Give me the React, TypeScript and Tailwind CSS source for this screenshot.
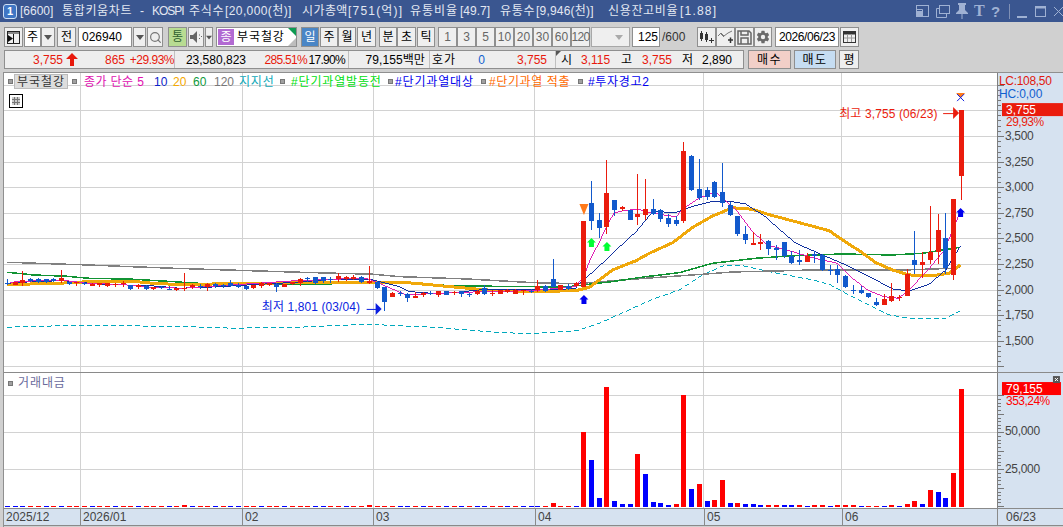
import React from "react";
import { Search } from "lucide-react";
import { IoSettingsSharp } from "react-icons/io5";

type Row = [number, number, number, number, string];
type Pt = [number, number];

// zoom-space readings -> page pixels
const seg = (base: number, rows: Row[]) =>
  rows.map(([hi, top, bot, lo, c]) => ({
    hi: Math.round(base + hi / 3),
    top: Math.round(base + top / 3),
    bot: Math.round(base + bot / 3),
    lo: Math.round(base + lo / 3),
    c,
  }));

const candles = [
  ...seg(250, [
    [88, 98, 100, 106, "b"], [97, 97, 104, 105, "r"], [63, 90, 100, 107, "r"], [83, 88, 92, 95, "b"],
    [85, 86, 96, 98, "b"], [86, 87, 97, 98, "b"], [85, 88, 94, 96, "b"], [60, 84, 93, 98, "r"],
    [95, 95, 102, 106, "b"], [95, 97, 99, 107, "r"], [95, 99, 101, 105, "b"], [99, 102, 107, 109, "r"],
    [99, 100, 106, 110, "r"], [99, 100, 107, 110, "r"], [99, 102, 104, 110, "r"], [92, 100, 103, 110, "r"],
    [105, 106, 116, 119, "b"], [103, 105, 110, 117, "r"], [105, 107, 116, 120, "b"], [110, 112, 116, 119, "r"],
    [107, 112, 114, 118, "b"], [109, 117, 119, 120, "b"], [115, 115, 121, 122, "r"], [69, 114, 116, 122, "r"],
    [103, 105, 112, 116, "r"], [102, 108, 110, 116, "b"], [100, 102, 111, 122, "r"], [100, 101, 108, 115, "b"],
    [103, 106, 108, 113, "b"], [90, 100, 107, 110, "b"], [100, 104, 110, 113, "b"], [108, 108, 118, 120, "b"],
    [106, 106, 113, 117, "r"], [95, 98, 107, 113, "r"], [98, 98, 106, 108, "r"], [100, 103, 110, 126, "b"],
    [102, 102, 110, 110, "r"], [97, 97, 103, 104, "r"], [85, 87, 98, 108, "r"],
  ]),
  ...seg(240, [
    [112, 114, 117, 126, "b"], [111, 111, 130, 133, "b"], [111, 111, 122, 130, "b"], [110, 117, 119, 130, "b"],
    [100, 108, 118, 126, "r"], [108, 112, 118, 122, "r"], [105, 110, 117, 121, "r"], [108, 111, 126, 128, "b"],
    [78, 123, 130, 131, "r"], [122, 125, 145, 148, "b"], [140, 142, 186, 213, "b"], [155, 159, 171, 172, "r"],
    [152, 159, 161, 168, "b"], [160, 162, 175, 186, "b"], [156, 168, 174, 174, "r"], [155, 159, 165, 170, "r"],
    [153, 158, 160, 165, "b"], [153, 154, 165, 171, "r"], [152, 153, 165, 166, "b"], [152, 155, 158, 166, "r"],
    [153, 153, 162, 170, "b"], [160, 161, 164, 170, "b"], [151, 153, 161, 164, "r"], [135, 145, 162, 165, "b"],
    [150, 158, 160, 167, "r"], [150, 150, 161, 161, "r"], [147, 150, 156, 160, "r"], [146, 150, 162, 162, "r"],
    [150, 150, 154, 165, "r"], [147, 152, 154, 159, "b"], [120, 139, 150, 155, "r"], [135, 137, 154, 155, "b"],
    [57, 117, 142, 142, "b"], [135, 135, 150, 150, "r"], [132, 137, 147, 150, "b"], [126, 130, 139, 140, "r"],
  ]),
  ...seg(130, [
    [273, 273, 470, 470, "r"], [153, 219, 272, 299, "b"], [249, 270, 293, 323, "b"], [90, 189, 290, 311, "r"],
    [210, 210, 240, 258, "b"], [228, 232, 236, 244, "r"], [240, 240, 270, 270, "b"], [132, 252, 260, 285, "r"],
    [147, 237, 255, 270, "r"], [207, 237, 251, 255, "b"], [237, 240, 267, 276, "b"], [252, 264, 282, 291, "b"],
    [258, 270, 282, 288, "b"], [36, 63, 273, 279, "r"], [75, 78, 180, 183, "b"], [87, 177, 204, 210, "b"],
    [171, 180, 201, 210, "b"], [153, 156, 201, 204, "b"], [99, 186, 219, 231, "b"], [216, 225, 255, 258, "b"],
    [258, 258, 312, 318, "b"], [288, 312, 330, 342, "b"], [306, 339, 345, 345, "r"], [312, 336, 342, 360, "r"],
    [330, 333, 357, 375, "b"], [345, 354, 360, 390, "b"], [336, 336, 378, 384, "b"],
  ]),
  ...seg(190, [
    [183, 198, 219, 222, "b"], [180, 210, 216, 225, "b"], [189, 198, 216, 216, "r"], [183, 192, 198, 219, "b"],
    [192, 195, 240, 243, "b"], [225, 240, 243, 255, "b"], [225, 237, 255, 279, "b"], [255, 258, 291, 294, "b"],
    [285, 300, 303, 312, "b"], [288, 300, 309, 312, "b"], [309, 309, 321, 324, "b"], [324, 336, 345, 348, "b"],
    [312, 327, 345, 345, "r"], [279, 318, 333, 336, "r"], [315, 321, 324, 333, "r"], [237, 252, 318, 318, "r"],
    [123, 210, 225, 252, "b"], [186, 216, 225, 264, "r"], [48, 186, 210, 222, "r"], [72, 120, 186, 222, "r"],
    [69, 144, 234, 252, "b"], [27, 27, 255, 270, "r"], [-240, -240, -42, 30, "r"],
  ]),
];

const z3 = (p: number[][]): Pt[] => p.map(([x, y]) => [x / 3, 250 + y / 3]);
const z4 = (p: number[][]): Pt[] => p.map(([x, y]) => [300 + x / 3, 240 + y / 3]);
const z5 = (p: number[][]): Pt[] => p.map(([x, y]) => [570 + x / 3, 130 + y / 3]);
const z6 = (p: number[][]): Pt[] => p.map(([x, y]) => [780 + x / 3, 190 + y / 3]);
const pts = (p: Pt[]) => p.map(([x, y]) => `${x.toFixed(1)},${y.toFixed(1)}`).join(" ");

const ma120: Pt[] = [
  ...z3([[21, 37], [170, 42], [265, 45], [360, 49], [520, 55], [680, 60], [900, 67]]),
  ...z4([[220, 103], [300, 110], [500, 117], [700, 128], [830, 131]]),
  ...z5([[200, 447], [400, 433], [490, 426], [660, 422]]),
  ...z6([[95, 240], [380, 240], [520, 235], [544, 232]]),
];
const ma60: Pt[] = [
  ...z3([[21, 67], [100, 75], [200, 79], [265, 85], [400, 88], [520, 95], [590, 100], [900, 103]]),
  ...z4([[200, 130], [345, 130], [450, 137], [660, 140], [800, 141]]),
  ...z5([[120, 456], [230, 440], [330, 428], [430, 400], [560, 385], [660, 378]]),
  ...z6([[187, 192], [340, 195], [430, 190], [544, 172]]),
];
const ma20: Pt[] = [
  ...z3([[21, 105], [95, 102], [180, 100], [250, 96], [410, 95], [480, 102], [590, 103], [900, 98]]),
  ...z4([[130, 128], [240, 128], [300, 127], [345, 130], [450, 140], [560, 150], [700, 155], [830, 152]]),
  ...z5([[60, 472], [130, 420], [200, 392], [240, 370], [310, 338], [370, 292], [430, 258], [490, 233], [550, 238], [600, 254], [660, 270]]),
  ...z6([[150, 122], [190, 150], [240, 182], [290, 218], [340, 240], [390, 255], [460, 257], [510, 250], [544, 225]]),
];
const ma10: Pt[] = [
  ...z3([[21, 100], [100, 95], [190, 92], [300, 103], [450, 107], [540, 115], [640, 111], [890, 97]]),
  ...z4([[50, 122], [100, 118], [220, 120], [300, 140], [330, 155], [420, 162], [540, 150], [700, 150], [790, 148], [830, 145]]),
  ...z5([[20, 470], [90, 408], [140, 360], [200, 305], [250, 245], [320, 247], [360, 232], [420, 216], [480, 214], [530, 222], [590, 262]]),
  ...z6([[0, 118], [50, 160], [130, 195], [200, 225], [280, 265], [340, 297], [390, 303], [450, 283], [500, 240], [544, 168]]),
];
const ma5: Pt[] = [
  ...z3([[30, 97], [100, 93], [200, 92], [260, 100], [380, 105], [450, 112], [550, 115], [650, 108], [890, 92]]),
  ...z4([[100, 118], [200, 115], [250, 135], [320, 165], [420, 160], [550, 155], [700, 152], [830, 140]]),
  ...z5([[20, 468], [43, 440], [64, 385], [88, 340], [112, 290], [133, 250], [157, 243], [205, 237], [250, 250], [320, 260], [343, 235], [388, 205], [436, 186], [457, 200], [505, 245], [550, 305], [595, 345], [660, 362]]),
  ...z6([[106, 205], [175, 220], [220, 265], [265, 300], [313, 320], [358, 325], [390, 300], [451, 235], [496, 180], [544, 65]]),
];
const support: Pt[] = [
  ...z3([[21, 232], [240, 226], [560, 230], [700, 235], [900, 232]]),
  ...z4([[200, 253], [400, 262], [600, 278], [700, 281], [830, 273], [900, 250]]),
  ...z5([[250, 508], [330, 480], [400, 435], [460, 408], [520, 407], [600, 425]]),
  ...z6([[100, 270], [150, 283], [200, 310], [270, 345], [330, 375], [400, 387], [500, 385], [520, 375], [544, 363]]),
];

const candleX = (i: number) => Math.round(7.05 + 7.698 * i);
const vGrid = [80, 242, 373, 535, 704, 842];
const priceGrid = [85, 110, 136, 162, 187, 213, 238, 264, 290, 315, 341, 366];
const priceLabels: [string, number][] = [
  ["3,500", 136], ["3,250", 162], ["3,000", 187], ["2,750", 213], ["2,500", 238],
  ["2,250", 264], ["2,000", 290], ["1,750", 315], ["1,500", 341],
];
const volGrid = [395, 432, 469];

// last 50 bars read off the volume pane: [top in zoom px, colour]
const volTail: [number, string][] = [
  [186, "r"], [270, "b"], [384, "b"], [51, "r"], [393, "b"], [402, "b"], [402, "b"], [252, "r"], [312, "b"], [396, "b"],
  [399, "b"], [405, "b"], [402, "r"], [75, "r"], [357, "b"], [342, "r"], [393, "b"], [390, "r"], [330, "r"], [399, "b"],
  [399, "r"], [402, "b"], [402, "b"], [405, "b"], [405, "r"], [405, "r"], [405, "b"], [405, "b"], [405, "r"], [408, "b"],
  [405, "r"], [405, "r"], [408, "b"], [405, "r"], [405, "r"], [405, "r"], [408, "b"], [408, "r"], [408, "r"], [408, "b"],
  [405, "r"], [408, "b"], [402, "r"], [393, "r"], [402, "b"], [360, "r"], [366, "b"], [384, "b"], [309, "r"], [57, "r"],
];
const volHead = "bbbrrbrbrrrbrrbrrbrrrbrrbrrbrbbrrbrrbrrrbbrrbrrbrrrbbrbrrbrbrbbrrbrbbbrbrrb";
const volumes = [
  ...Array.from({ length: 75 }).map((_, i) => ({
    top: i === 23 || i === 47 ? 505 : i === 71 ? 503 : 506,
    c: i === 23 || i === 47 || i === 71 ? "r" : volHead[i],
  })),
  ...volTail.map(([t, c]) => ({ top: Math.round(370 + t / 3), c })),
];

const BlockUp = ({ x, y, c }: { x: number; y: number; c: string }) => (
  <polygon
    points={`${x},${y} ${x + 4.5},${y + 4.5} ${x + 2.5},${y + 4.5} ${x + 2.5},${y + 9} ${x - 2.5},${y + 9} ${x - 2.5},${y + 4.5} ${x - 4.5},${y + 4.5}`}
    fill={c}
  />
);

const Ticks = ({ ys, x = 0 }: { ys: number[]; x?: number }) => (
  <g stroke="#777777" shapeRendering="crispEdges">
    {ys.map((y) => (
      <line key={y} x1={x} x2={x + 6} y1={y + 0.5} y2={y + 0.5} />
    ))}
    {ys.slice(0, -1).flatMap((y, i) =>
      [1, 2, 3, 4].map((k) => {
        const my = Math.round(y + ((ys[i + 1] - y) * k) / 5) + 0.5;
        return <line key={`${y}-${k}`} x1={x} x2={x + 3} y1={my} y2={my} />;
      })
    )}
  </g>
);

const PriceChart = () => (
  <svg width={994} height={299} viewBox="4 73 994 299" className="block bg-white">
    <g stroke="#d2d2d2" shapeRendering="crispEdges">
      {priceGrid.map((y) => (
        <line key={y} x1={4} x2={998} y1={y + 0.5} y2={y + 0.5} />
      ))}
      {vGrid.map((x) => (
        <line key={x} x1={x + 0.5} x2={x + 0.5} y1={73} y2={372} />
      ))}
    </g>
    <g fill="none" shapeRendering="crispEdges">
      <polyline points={pts(support)} stroke="#00a9bd" strokeWidth={1} strokeDasharray="5 3" />
      <polyline points={pts(ma120)} stroke="#808080" strokeWidth={1.5} />
      <polyline points={pts(ma60)} stroke="#119333" strokeWidth={1.5} />
      <polyline points={pts(ma20)} stroke="#f0a80a" strokeWidth={3} />
      <polyline points={pts(ma10)} stroke="#10309f" strokeWidth={1} />
      <polyline points={pts(ma5)} stroke="#e01fb4" strokeWidth={1} />
    </g>
    <g shapeRendering="crispEdges">
      {candles.map((k, i) => {
        const x = candleX(i);
        const fill = k.c === "r" ? "#ea1c0d" : "#1259cc";
        return (
          <g key={i} fill={fill}>
            <rect x={x} width={1} y={k.hi} height={Math.max(k.lo - k.hi, 1)} />
            <rect x={x - 2} width={5} y={k.top} height={Math.max(k.bot - k.top, 1)} />
          </g>
        );
      })}
    </g>
    <BlockUp x={584.5} y={295} c="#0000ee" />
    <BlockUp x={592} y={238} c="#00ff33" />
    <BlockUp x={607.5} y={242} c="#00ff33" />
    <BlockUp x={961.5} y={208} c="#0000ee" />
    <polygon points="580,204 589,204 584.5,215" fill="#ff7a1a" />
    <polygon points="957,93 966,93 961.5,98" fill="#ff7a1a" />
    <path d="M958 94 L965 101 M965 94 L958 101" stroke="#1020e0" strokeWidth={1} />
    <text x={262} y={311} fontSize={12} fill="#0a1ee0" letterSpacing={0.12}>최저 1,801 (03/04)</text>
    <path d="M367 309.5 H378" stroke="#0a1ee0" strokeWidth={1} />
    <polygon points="376,303 382,309 376,315" fill="#0a1ee0" />
    <text x={840} y={118} fontSize={12} fill="#ea1c0d" letterSpacing={0.12}>최고 3,755 (06/23)</text>
    <path d="M944 113.5 H956" stroke="#ea1c0d" strokeWidth={1} />
    <polygon points="954,107 960,113 954,119" fill="#ea1c0d" />
  </svg>
);

const PriceAxis = () => {
  const ys = priceGrid;
  return (
    <svg width={65} height={299} viewBox="998 73 65 299" className="block bg-[#d6e2f0]">
      <g transform="translate(998 0)">
        <Ticks ys={ys} />
      </g>
      <text x={999} y={85} fontSize={12} fill="#e0190c" letterSpacing={-0.3}>LC:108,50</text>
      <text x={999} y={98} fontSize={12} fill="#1060d0" letterSpacing={-0.1}>HC:0,00</text>
      <rect x={1002} y={103} width={61} height={13} fill="#ea1c0d" />
      <text x={1006} y={114} fontSize={12} fill="#ffffff">3,755</text>
      <text x={1006} y={126} fontSize={12} fill="#ea1c0d" letterSpacing={-0.5}>29,93%</text>
      {priceLabels.map(([t, y]) => (
        <text key={t} x={1005} y={y + 4} fontSize={12} fill="#444444" letterSpacing={-0.3}>{t}</text>
      ))}
    </svg>
  );
};

const VolumeChart = () => (
  <svg width={994} height={135} viewBox="4 373 994 135" className="block bg-white">
    <g stroke="#d2d2d2" shapeRendering="crispEdges">
      {volGrid.map((y) => (
        <line key={y} x1={4} x2={998} y1={y + 0.5} y2={y + 0.5} />
      ))}
      {vGrid.map((x) => (
        <line key={x} x1={x + 0.5} x2={x + 0.5} y1={373} y2={508} />
      ))}
    </g>
    <g shapeRendering="crispEdges">
      {volumes.map((v, i) => (
        <rect key={i} x={candleX(i) - 2} width={5} y={v.top} height={507 - v.top} fill={v.c === "r" ? "#ff0000" : "#0000ff"} />
      ))}
    </g>
  </svg>
);

const VolumeAxis = () => (
  <svg width={65} height={135} viewBox="998 373 65 135" className="block bg-[#d6e2f0]">
    <g transform="translate(998 0)">
      <Ticks ys={[395, 414, 432, 451, 469, 488, 506]} />
    </g>
    <rect x={1002} y={382} width={59} height={13} fill="#ff0000" />
    <text x={1006} y={393} fontSize={12} fill="#ffffff">79,155</text>
    <text x={1006} y={405} fontSize={12} fill="#ff0000" letterSpacing={-0.5}>353,24%</text>
    <rect x={1053} y={376} width={7} height={7} fill="#555555" />
    <path d="M1055 378 L1058 381 M1058 378 L1055 381" stroke="#ffffff" strokeWidth={1} />
    <text x={1005} y={435} fontSize={12} fill="#444444" letterSpacing={-0.3}>50,000</text>
    <text x={1005} y={473} fontSize={12} fill="#444444" letterSpacing={-0.3}>25,000</text>
  </svg>
);

const Btn = ({ className = "", children }: { className?: string; children?: React.ReactNode }) => (
  <div className={`h-[20px] shrink-0 flex items-center justify-center border border-[#8f8f8f] text-[12px] ${className}`}>
    {children}
  </div>
);

const Arrow = ({ c = "#555555" }: { c?: string }) => (
  <svg width={8} height={5} viewBox="0 0 8 5"><polygon points="0,0 8,0 4,5" fill={c} /></svg>
);

const Square = ({ className = "" }: { className?: string }) => (
  <span className={`w-[5px] h-[5px] mx-px bg-[#a0a0a0] border border-[#777777] ${className}`} />
);

const TitleIcons = () => (
  <div className="flex items-center text-[#9fb1d3] ml-auto">
    <svg width={13} height={13} viewBox="0 0 13 13" fill="none" stroke="currentColor" strokeWidth={1} className="mr-[7px]">
      <rect x={0.5} y={0.5} width={12} height={11} />
      <path d="M0.5 4.5 H6.5 V11.5" />
      <rect x={1} y={6} width={5} height={5} fill="currentColor" stroke="none" />
    </svg>
    <svg width={14} height={13} viewBox="0 0 14 13" fill="none" stroke="currentColor" strokeWidth={1} className="mr-[6px]">
      <rect x={3.5} y={0.5} width={10} height={8} />
      <path d="M3.5 3.5 H0.5 V12.5 H10.5 V8.5" />
    </svg>
    <svg width={12} height={16} viewBox="0 0 12 16" fill="currentColor" className="mr-[6px]">
      <path d="M2 0 H10 V2 H9 V7 L12 10 V11 H0 V10 L3 7 V2 H2 Z" />
      <rect x={5.5} y={11} width={1} height={5} />
    </svg>
    <span className="font-['Liberation_Serif',serif] font-bold text-[16px] leading-none w-[12px] mr-[5px]">T</span>
    <span className="font-['Liberation_Sans',sans-serif] font-bold text-[15px] leading-none w-[10px]">?</span>
    <div className="w-px h-[15px] bg-[#7f90b5] ml-[8px] mr-[7px]" />
    <svg width={10} height={12} viewBox="0 0 10 12" fill="currentColor" className="mr-[8px] mt-[3px]"><rect y={9} width={10} height={2} /></svg>
    <svg width={11} height={11} viewBox="0 0 11 11" fill="none" stroke="currentColor" className="mr-[8px]"><rect x={0.5} y={0.5} width={10} height={10} /><rect x={0.5} y={0.5} width={10} height={1.5} fill="currentColor" /></svg>
    <svg width={9} height={9} viewBox="0 0 9 9" stroke="currentColor"><path d="M0 0 L9 9 M9 0 L0 9" /></svg>
  </div>
);

const App = () => {
  return (
    <div className="w-[1063px] h-[527px] overflow-hidden bg-[#d0d0d0] flex flex-col font-['Liberation_Sans','Noto_Sans_CJK_KR',sans-serif] text-[12px] text-black">
      {/* title bar */}
      <div className="h-[22px] shrink-0 bg-[#3a5690] flex items-center pl-[3px] text-[#e3e8f2]">
        <div className="w-[14px] h-[15px] rounded-[3px] border border-[#cfe0f5] bg-[#3f76c4] flex items-center justify-center text-white font-bold text-[11px] leading-none">1</div>
        <div className="flex whitespace-pre text-[12px]">
          <span className="ml-[3px] w-[34px]">[6600]</span>
          <span className="ml-[8px] w-[70px] tracking-[0.65px]">통합키움차트</span>
          <span className="ml-[8px] w-[12px]">-</span>
          <span className="w-[37px] tracking-[-1px]">KOSPI</span>
          <span className="w-[36px] tracking-[0.65px]">주식수</span>
          <span className="w-[69px] tracking-[0.4px]">[20,000(천)]</span>
          <span className="ml-[8px] w-[46px] tracking-[0.4px]">시가총액</span>
          <span className="w-[54px] tracking-[1.2px]">[751(억)]</span>
          <span className="ml-[8px] w-[50px] tracking-[1px]">유통비율</span>
          <span className="w-[32px]">[49.7]</span>
          <span className="ml-[8px] w-[36px] tracking-[0.65px]">유통수</span>
          <span className="w-[64px] tracking-[0.2px]">[9,946(천)]</span>
          <span className="ml-[8px] w-[72px] tracking-[0.65px]">신용잔고비율</span>
          <span className="w-[33px] tracking-[1.2px]">[1.88]</span>
        </div>
        <TitleIcons />
      </div>

      {/* toolbar 1 */}
      <div className="h-[20px] mt-[5px] shrink-0 flex items-center pl-[4px]">
        <Btn className="w-[19px] bg-[#efefef]">
          <svg width={13} height={13} viewBox="0 0 13 13" fill="none">
            <rect x={0.5} y={0.5} width={12} height={12} stroke="#222" />
            <rect x={1} y={1} width={11} height={2} fill="#888" />
            <polygon points="1,4 6,7.5 1,11" fill="#111" />
            <path d="M6.5 3 V12" stroke="#111" />
          </svg>
        </Btn>
        <Btn className="w-[17px] ml-px bg-white">주</Btn>
        <Btn className="w-[14px] bg-[#efefef]"><Arrow /></Btn>
        <Btn className="w-[19px] ml-[2px] bg-[#efefef]">전</Btn>
        <Btn className="w-[54px] ml-[2px] bg-white justify-start pl-[3px]">026940</Btn>
        <Btn className="w-[13px] ml-px bg-[#efefef]"><Arrow /></Btn>
        <Btn className="w-[16px] ml-px bg-[#efefef]"><Search size={13} color="#777777" strokeWidth={2.2} /></Btn>
        <Btn className="w-[19px] ml-[5px] bg-[#b8dc92] text-[#306030]">통</Btn>
        <Btn className="w-[16px] ml-px bg-[#efefef]">
          <svg width={12} height={12} viewBox="0 0 12 12" fill="#666666">
            <polygon points="0,4 3,4 7,0 7,12 3,8 0,8" />
            <rect x={9} y={3.5} width={1} height={1} /><rect x={9} y={7} width={1} height={1} /><rect x={11} y={5} width={1} height={1} />
          </svg>
        </Btn>
        <Btn className="w-[8px] ml-px bg-[#efefef]"><Arrow /></Btn>
        <Btn className="w-[81px] ml-[3px] bg-white justify-start pl-px relative overflow-hidden">
          <span className="w-[16px] h-[16px] bg-[#b26ad2] text-white flex items-center justify-center">종</span>
          <span className="ml-[3px] tracking-[0.9px]">부국철강</span>
          <span className="absolute right-0 top-0 w-0 h-0 border-l-[8px] border-l-transparent border-t-[8px] border-t-[#0d9b52]" />
          <span className="absolute right-0 bottom-0 w-0 h-0 border-l-[8px] border-l-transparent border-b-[8px] border-b-[#bdbdbd]" />
        </Btn>
        <Btn className="w-[18px] ml-[4px] bg-[#4a86c6] text-white">일</Btn>
        <Btn className="w-[18px] ml-px bg-[#efefef]">주</Btn>
        <Btn className="w-[18px] bg-[#efefef]">월</Btn>
        <Btn className="w-[19px] ml-px bg-[#efefef]">년</Btn>
        <Btn className="w-[18px] ml-[3px] bg-[#efefef]">분</Btn>
        <Btn className="w-[19px] bg-[#efefef]">초</Btn>
        <Btn className="w-[18px] ml-px bg-[#efefef]">틱</Btn>
        <Btn className="w-[19px] ml-[3px] bg-[#efefef] text-[#666666]">1</Btn>
        <Btn className="w-[19px] bg-[#efefef] text-[#666666]">3</Btn>
        <Btn className="w-[19px] bg-[#efefef] text-[#666666]">5</Btn>
        <Btn className="w-[19px] bg-[#efefef] text-[#666666]">10</Btn>
        <Btn className="w-[19px] bg-[#efefef] text-[#666666]">20</Btn>
        <Btn className="w-[19px] bg-[#efefef] text-[#666666]">30</Btn>
        <Btn className="w-[19px] bg-[#efefef] text-[#666666]">60</Btn>
        <Btn className="w-[19px] bg-[#efefef] text-[#666666] tracking-[-0.6px]">120</Btn>
        <Btn className="w-[39px] ml-[1px] bg-[#efefef] justify-end pr-[6px] border-[#a8a8a8]"><Arrow c="#aaaaaa" /></Btn>
        <Btn className="w-[28px] ml-[2px] bg-white justify-end pr-px">125</Btn>
        <span className="ml-[2px] w-[24px] text-[#333333]">/600</span>
        <Btn className="w-[19px] ml-[11px] bg-[#efefef]">
          <svg width={15} height={14} viewBox="0 0 15 14" fill="#333333">
            <rect x={1} y={3} width={3} height={6} /><rect x={2} y={1} width={1} height={10} />
            <rect x={6} y={4} width={3} height={6} /><rect x={7} y={2} width={1} height={10} />
            <path d="M10 10 H12 V8 H13 V10 H15 V11 H13 V13 H12 V11 H10 Z" />
          </svg>
        </Btn>
        <Btn className="w-[19px] bg-[#efefef]">
          <svg width={15} height={14} viewBox="0 0 15 14" fill="none" stroke="#777777" strokeWidth={1}>
            <path d="M0 6 L3 3 L6 6 L10 3 L14 1" />
            <path d="M2 3 L6 7" />
            <path d="M10 10 H15 M12.5 7.5 V13" stroke="#333333" strokeWidth={1.5} />
          </svg>
        </Btn>
        <Btn className="w-[19px] bg-[#efefef]">
          <svg width={15} height={15} viewBox="0 0 15 15" fill="none" stroke="#666666" strokeWidth={1.5}>
            <path d="M1 1 H12 L14 3 V14 H1 Z" />
            <path d="M4 1 V5 H11 V1 M4 14 V8 H11 V14" />
          </svg>
        </Btn>
        <Btn className="w-[18px] bg-[#efefef]"><IoSettingsSharp size={14} color="#6a6a6a" /></Btn>
        <Btn className="w-[64px] ml-[3px] bg-white tracking-[-0.4px]">2026/06/23</Btn>
        <Btn className="w-[19px] ml-px bg-[#efefef]">
          <svg width={13} height={12} viewBox="0 0 13 12" fill="none" stroke="#333333">
            <rect x={0.5} y={0.5} width={12} height={11} />
            <rect x={0.5} y={0.5} width={12} height={2.5} fill="#333333" />
            <path d="M4.5 3 V11 M8.5 3 V11 M1 7 H12" stroke="#999999" />
          </svg>
        </Btn>
      </div>

      {/* toolbar 2 */}
      <div className="h-[19px] mt-[3px] shrink-0 flex items-center pl-[4px]">
        <div className="w-[740px] h-full border border-[#8f8f8f] bg-[#eeeeee] flex items-center">
          <div className="w-[170px] h-full flex items-center border-r border-[#c0c0c0] text-[#e8190c]">
            <span className="w-[58px] text-right">3,755</span>
            <svg width={12} height={13} viewBox="0 0 12 13" fill="#e8190c" className="ml-[3px]"><polygon points="6,0 12,6 8,6 8,13 4,13 4,6 0,6" /></svg>
            <span className="w-[47px] text-right">865</span>
            <span className="w-[49px] text-right tracking-[-0.5px]">+29.93%</span>
          </div>
          <span className="w-[71px] text-right">23,580,823</span>
          <span className="w-[61px] text-right text-[#e8190c] tracking-[-0.7px]">285.51%</span>
          <span className="w-[38px] text-right tracking-[-0.7px]">17.90%</span>
          <div className="h-full ml-[3px] border-l border-[#c0c0c0] w-[81px] flex items-center justify-end pr-[4px] tracking-[0.1px]">79,155백만</div>
          <div className="h-full border-l border-[#c0c0c0] w-[126px] flex items-center pl-[2px]">
            <span className="w-[24px] tracking-[0.9px]">호가</span>
            <span className="w-[29px] text-right text-[#1060d0]">0</span>
            <span className="w-[62px] text-right text-[#e8190c]">3,755</span>
          </div>
          <div className="h-full border-l border-[#c0c0c0] flex-1 flex items-center relative">
            <span className="absolute left-0 top-0 w-0 h-0 border-r-[5px] border-r-transparent border-t-[5px] border-t-[#555555]" />
            <span className="ml-[5px] w-[13px]">시</span>
            <span className="ml-[7px] w-[32px] text-[#e8190c]">3,115</span>
            <span className="ml-[8px] w-[14px]">고</span>
            <span className="ml-[7px] w-[32px] text-[#e8190c]">3,755</span>
            <span className="ml-[8px] w-[14px]">저</span>
            <span className="ml-[6px] w-[32px]">2,890</span>
          </div>
        </div>
        <Btn className="!h-[19px] w-[43px] ml-[4px] bg-[#f2cfc8] tracking-[1.5px]">매수</Btn>
        <Btn className="!h-[19px] w-[42px] ml-[3px] bg-[#c6ddf2] tracking-[1.5px]">매도</Btn>
        <Btn className="!h-[19px] w-[20px] ml-[3px] bg-[#efefef]">평</Btn>
      </div>

      {/* chart */}
      <div className="mt-[3px] flex-1 flex flex-col ml-[3px] border-l border-t border-[#8f8f8f] min-h-0">
        <div className="flex relative">
          <PriceChart />
          <div className="border-l border-[#808080]" />
          <PriceAxis />
          {/* legend */}
          <div className="absolute left-[3px] top-[1px] flex items-center h-[15px] text-[12px] whitespace-pre">
            <Square />
            <span className="w-[54px] h-[15px] bg-[#dddddd] border border-[#bbbbbb] text-[#333333] flex items-center justify-center leading-none tracking-[0.9px]">부국철강</span>
            <Square className="ml-[4px]" />
            <span className="ml-[6px] w-[70px] text-[#e010b0] tracking-[0.4px]">종가 단순 5</span>
            <span className="w-[19px] text-[#0a22c8]">10</span>
            <span className="w-[20px] text-[#f5a800]">20</span>
            <span className="w-[21px] text-[#0f9a3c]">60</span>
            <span className="w-[25px] text-[#777777]">120</span>
            <span className="w-[40px] text-[#0fa8b8] tracking-[0.8px]">지지선</span>
            <Square />
            <span className="ml-[5px] w-[96px] text-[#00e010] tracking-[0.85px]">#단기과열발동전</span>
            <Square />
            <span className="ml-[1px] w-[85px] text-[#0000ee] tracking-[0.85px]">#단기과열대상</span>
            <Square />
            <span className="ml-[2px] w-[88px] text-[#ff6a00] tracking-[0.6px]">#단기과열 적출</span>
            <Square />
            <span className="ml-[4px] text-[#0000ee] tracking-[0.7px]">#투자경고2</span>
          </div>
          <div className="absolute left-[5px] top-[21px] w-[14px] h-[14px] bg-white border border-black p-[2px]">
            <div className="w-full h-full grid grid-cols-3 grid-rows-3 gap-px bg-[#777777]">
              {Array.from({ length: 9 }).map((_, i) => (
                <div key={i} className="bg-[#cccccc]" />
              ))}
            </div>
          </div>
        </div>
        <div className="h-px shrink-0 bg-[#8a8a8a]" />
        <div className="flex relative">
          <VolumeChart />
          <div className="border-l border-[#808080]" />
          <VolumeAxis />
          <div className="absolute left-[3px] top-[1px] flex items-center text-[#6a6a9c] whitespace-pre">
            <Square />
            <span className="ml-[4px] tracking-[0.9px]">거래대금</span>
          </div>
        </div>
        {/* time axis */}
        <div className="h-[18px] shrink-0 bg-[#d6e2f0] border-y border-[#8a8a8a] flex text-[#444444] leading-none items-stretch">
          <div className="w-[76px] flex items-center pl-[2px]">2025/12</div>
          <div className="w-[162px] flex items-center pl-[2px] border-l border-[#8a8a8a]">2026/01</div>
          <div className="w-[131px] flex items-center pl-[2px] border-l border-[#8a8a8a]">02</div>
          <div className="w-[162px] flex items-center pl-[2px] border-l border-[#8a8a8a]">03</div>
          <div className="w-[169px] flex items-center pl-[2px] border-l border-[#8a8a8a]">04</div>
          <div className="w-[138px] flex items-center pl-[2px] border-l border-[#8a8a8a]">05</div>
          <div className="w-[155px] flex items-center pl-[2px] border-l border-[#8a8a8a]">06</div>
          <div className="flex-1 flex items-center pl-[8px] border-l border-[#8a8a8a]">06/23</div>
        </div>
      </div>
    </div>
  );
};

export default App;
